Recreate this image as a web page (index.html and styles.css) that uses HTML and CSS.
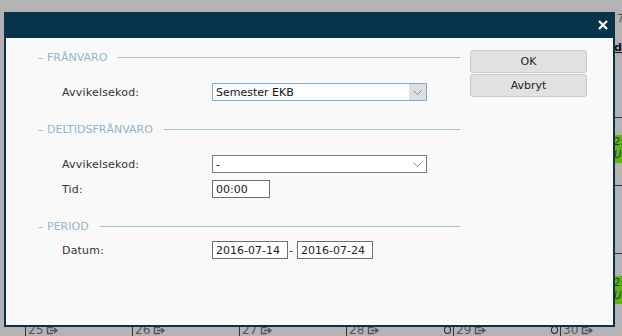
FILE: index.html
```html
<!DOCTYPE html>
<html lang="sv">
<head>
    <meta charset="UTF-8">
    <title>Frånvaro</title>
    <link rel="stylesheet" href="styles.css">
</head>
<body>
    <!-- Calendar behind the dialog -->
    <div class="calendar">
        <div class="cal-week">
            <div class="cal-strip">
                <div class="strip-head">
                    <span class="strip-time">7:</span>
                    <span class="strip-day">da</span>
                </div>
                <div class="strip-cell"><div class="strip-event">2:<br><i>U</i></div></div>
                <div class="strip-cell"></div>
                <div class="strip-cell strip-cell-last"><div class="strip-event">2:<br><i>U</i></div></div>
            </div>
        </div>
        <div class="cal-days">
            <div class="cal-day">25 <svg class="day-icon" width="13" height="9" viewBox="0 0 13 9"><path d="M7 1.5H1.5v6H7" fill="none" stroke="#555" stroke-width="1.4"/><path d="M4 4.5h6M8 2l3 2.5L8 7" fill="none" stroke="#555" stroke-width="1.4"/></svg></div>
            <div class="cal-day">26 <svg class="day-icon" width="13" height="9" viewBox="0 0 13 9"><path d="M7 1.5H1.5v6H7" fill="none" stroke="#555" stroke-width="1.4"/><path d="M4 4.5h6M8 2l3 2.5L8 7" fill="none" stroke="#555" stroke-width="1.4"/></svg></div>
            <div class="cal-day">27 <svg class="day-icon" width="13" height="9" viewBox="0 0 13 9"><path d="M7 1.5H1.5v6H7" fill="none" stroke="#555" stroke-width="1.4"/><path d="M4 4.5h6M8 2l3 2.5L8 7" fill="none" stroke="#555" stroke-width="1.4"/></svg></div>
            <div class="cal-day">28 <svg class="day-icon" width="13" height="9" viewBox="0 0 13 9"><path d="M7 1.5H1.5v6H7" fill="none" stroke="#555" stroke-width="1.4"/><path d="M4 4.5h6M8 2l3 2.5L8 7" fill="none" stroke="#555" stroke-width="1.4"/></svg><span class="day-dot"></span></div>
            <div class="cal-day">29 <svg class="day-icon" width="13" height="9" viewBox="0 0 13 9"><path d="M7 1.5H1.5v6H7" fill="none" stroke="#555" stroke-width="1.4"/><path d="M4 4.5h6M8 2l3 2.5L8 7" fill="none" stroke="#555" stroke-width="1.4"/></svg><span class="day-dot"></span></div>
            <div class="cal-day">30 <svg class="day-icon" width="13" height="9" viewBox="0 0 13 9"><path d="M7 1.5H1.5v6H7" fill="none" stroke="#555" stroke-width="1.4"/><path d="M4 4.5h6M8 2l3 2.5L8 7" fill="none" stroke="#555" stroke-width="1.4"/></svg></div>
        </div>
    </div>

    <!-- Dialog -->
    <div class="dialog">
        <div class="dialog-head">
            <svg class="close-icon" width="10" height="10" viewBox="0 0 10 10"><path d="M1 1l8 8M9 1l-8 8" stroke="#fff" stroke-width="2.2"/></svg>
        </div>
        <div class="dialog-body">
            <div class="form">
                <!-- Frånvaro -->
                <div class="legend"><span>– FRÅNVARO</span><span class="legend-line"></span></div>
                <div class="row row-first">
                    <span class="label">Avvikelsekod:</span>
                    <div class="select select-active">
                        <span>Semester EKB</span>
                        <span class="select-arrow"><svg width="9" height="5" viewBox="0 0 9 5"><path d="M0.5 0.5l4 4 4-4" fill="none" stroke="#888"/></svg></span>
                    </div>
                </div>
                <!-- Deltidsfrånvaro -->
                <div class="legend legend-gap"><span>– DELTIDSFRÅNVARO</span><span class="legend-line"></span></div>
                <div class="row row-first">
                    <span class="label">Avvikelsekod:</span>
                    <div class="select">
                        <span>-</span>
                        <span class="select-arrow"><svg width="9" height="5" viewBox="0 0 9 5"><path d="M0.5 0.5l4 4 4-4" fill="none" stroke="#888"/></svg></span>
                    </div>
                </div>
                <div class="row">
                    <span class="label">Tid:</span>
                    <input class="field field-time" type="text" value="00:00">
                </div>
                <!-- Period -->
                <div class="legend legend-gap"><span>– PERIOD</span><span class="legend-line"></span></div>
                <div class="row row-date">
                    <span class="label">Datum:</span>
                    <input class="field field-date" type="text" value="2016-07-14">
                    <span class="date-dash">-</span>
                    <input class="field field-date" type="text" value="2016-07-24">
                </div>
            </div>
            <div class="buttons">
                <button class="btn">OK</button>
                <button class="btn">Avbryt</button>
            </div>
        </div>
    </div>
</body>
</html>
```

FILE: styles.css
```css
/* Page */
body {
    margin: 0;
    background-color: #b3b3b3;
    font-family: "DejaVu Sans", Verdana, sans-serif;
    font-size: 11px;
    color: #333;
    overflow: hidden;
}
/* Calendar behind */
.calendar {
    height: 336px;
    display: flex;
    flex-direction: column;
}
.cal-week {
    flex: 1;
}
.cal-strip {
    margin-left: 614px;
    width: 8px;
    overflow: hidden;
    white-space: nowrap;
}
.strip-head {
    height: 117px;
    display: flex;
    flex-direction: column;
    padding-top: 12px;
    box-sizing: border-box;
}
.strip-time {
    padding-left: 3px;
    color: #555;
}
.strip-day {
    margin-top: 16px;
    font-weight: bold;
    color: #111;
    text-decoration: underline;
}
.strip-cell {
    height: 68px;
    border-top: 1px solid #333;
    padding-top: 17px;
    box-sizing: border-box;
}
.strip-cell-last {
    padding-top: 22px;
}
.strip-event {
    height: 28px;
    background-color: #5fb30f;
    color: #234;
    font-size: 10px;
    line-height: 13px;
}
.cal-days {
    height: 12px;
    display: flex;
    padding-left: 25px;
}
.cal-day {
    width: 107px;
    flex: none;
    border-left: 1px solid #333;
    padding-left: 2px;
    box-sizing: border-box;
    display: flex;
    align-items: center;
    gap: 3px;
    font-size: 12px;
    color: #555;
    line-height: 12px;
}
.day-dot {
    margin-left: auto;
    margin-right: 2px;
    width: 5px;
    height: 6px;
    border: 1.5px solid #222;
    border-radius: 50%;
}
/* Dialog */
.dialog {
    position: absolute;
    left: 4px;
    top: 12px;
    width: 611px;
    height: 315px;
    box-sizing: border-box;
    padding: 0 2px 2px;
    background-color: #07344b;
    display: flex;
    flex-direction: column;
}
.dialog-head {
    height: 26px;
    flex: none;
    display: flex;
    justify-content: flex-end;
    align-items: center;
    padding-right: 5px;
}
.dialog-body {
    flex: 1;
    background-color: #f9f9f9;
    display: flex;
    gap: 10px;
    padding: 12px 26px 0 32px;
}
.form {
    width: 422px;
}
.legend {
    height: 14px;
    display: flex;
    align-items: center;
    color: #94b5cb;
}
.legend-line {
    flex: 1;
    height: 1px;
    margin-left: 11px;
    background-color: #9fc2d4;
}
.legend-gap {
    margin-top: 21px;
}
.row {
    display: flex;
    align-items: center;
    height: 18px;
    margin-top: 7px;
    padding-left: 24px;
}
.row-first {
    margin-top: 19px;
}
.row-date {
    margin-top: 8px;
}
.label {
    width: 150px;
    flex: none;
    letter-spacing: 0.2px;
}
.select {
    width: 215px;
    height: 18px;
    box-sizing: border-box;
    border: 1px solid #7a7a7a;
    background-color: #fff;
    display: flex;
    align-items: center;
    padding-left: 3px;
    color: #111;
}
.select span:first-child {
    flex: 1;
}
.select-arrow {
    width: 17px;
    height: 16px;
    display: flex;
    align-items: center;
    justify-content: center;
}
.select-active {
    border-color: #7aaed4;
}
.select-active .select-arrow {
    background-color: #dedede;
}
.field {
    height: 18px;
    box-sizing: border-box;
    border: 1px solid #6e6e6e;
    background-color: #fff;
    padding: 0 3px;
    margin: 0;
    font-family: inherit;
    font-size: 11px;
    color: #222;
    outline: none;
}
.field-time {
    width: 58px;
}
.field-date {
    width: 76px;
}
.date-dash {
    margin: 0 4px 0 1px;
}
/* Buttons */
.buttons {
    width: 117px;
    display: flex;
    flex-direction: column;
    gap: 1px;
}
.btn {
    height: 23px;
    border: 1px solid #cacaca;
    border-radius: 3px;
    background-color: #e1e1e1;
    font-family: inherit;
    font-size: 11px;
    color: #222;
    padding: 0;
}
```
